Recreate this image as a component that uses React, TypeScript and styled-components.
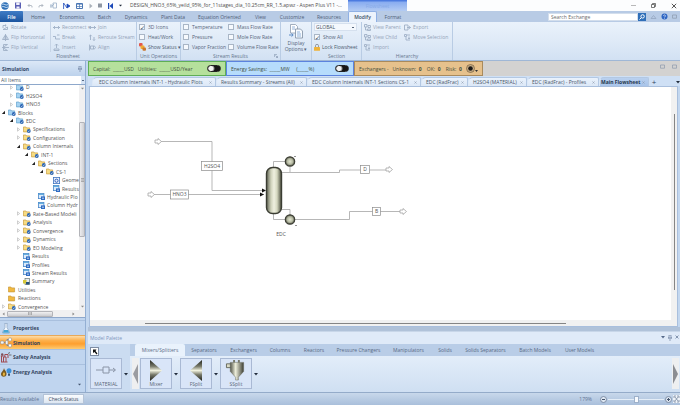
import React from "react";
import styled, { createGlobalStyle, css } from "styled-components";

const Global = createGlobalStyle`
  * { box-sizing: border-box; }
  html, body { margin: 0; }
  body { font-family: "Open Sans", "Noto Sans", sans-serif; font-size: 5px; line-height: 8px; color: #4b5766; }
  button, input, select { font: inherit; color: inherit; margin: 0; padding: 0; border: 0; background: none; border-radius: 0; }
  svg { display: block; flex: none; }
`;

const Shell = styled.div`
  display: flex;
  flex-direction: column;
  height: 100vh;
  background: #c3d7ef;
  overflow: hidden;
  white-space: nowrap;
`;

/* ---------- title bar ---------- */

const TitleBar = styled.header`
  display: flex;
  align-items: stretch;
  height: 11px;
  background: #fcfdfe;
`;
const QuickAccess = styled.div`
  display: flex;
  align-items: center;
  justify-content: space-between;
  width: 124px;
  padding: 0 2px 0 1px;
`;
const ToolButton = styled.button`
  display: grid;
  place-items: center;
`;
const DocTitle = styled.div`
  width: 224px;
  padding: 1px 0 0 6px;
  color: #4d4d4d;
`;
const ContextTab = styled.div`
  width: 59px;
  padding-top: 2px;
  text-align: center;
  color: #86a9e8;
  background: linear-gradient(#4c7be0 0 1px, #88acf0 2px, #b3cbf3);
`;
const WindowButtons = styled.div`
  display: flex;
  align-items: center;
  gap: 15px;
  margin-left: auto;
  padding-right: 3px;
`;

/* ---------- ribbon ---------- */

const TabStrip = styled.nav`
  display: flex;
  align-items: stretch;
  height: 11px;
  background: #b8cbe5;
`;
const RibbonTab = styled.button<{ $w: number; $kind?: "file" | "active" }>`
  width: ${(p) => p.$w}px;
  color: #4f6078;
  ${(p) => p.$kind === "file" && css`
    color: #fff;
    font-weight: 600;
    background: linear-gradient(#3f7cc6, #1d559f);
    border-radius: 1px 1px 0 0;
  `}
  ${(p) => p.$kind === "active" && css`
    font-weight: 600;
    color: #3c4c63;
    background: #ecf3fc;
    border: 1px solid #8fb0e4;
    border-bottom: 0;
    border-radius: 2px 2px 0 0;
  `}
`;
const SearchArea = styled.div`
  display: flex;
  align-items: center;
  gap: 4px;
  margin-left: auto;
  padding-right: 3px;
`;
const SearchInput = styled.input`
  width: 90px;
  height: 8px;
  padding: 0 2px;
  background: #fff;
  border: 1px solid #d3deec;
  &::placeholder { color: #6a6a6a; opacity: 1; }
`;
const SearchGroup = styled.div`
  display: flex;
  align-items: center;
`;
const Ribbon = styled.section`
  display: flex;
  height: 39px;
  background: linear-gradient(#eaf2fb, #dfeaf7 50%, #d2e1f3);
  border-bottom: 1px solid #9fb7d6;
`;
const Group = styled.div<{ $w: number }>`
  display: flex;
  flex-direction: column;
  width: ${(p) => p.$w}px;
  border-right: 1px solid #b9cce4;
`;
const GroupBody = styled.div`
  display: flex;
  flex: 1;
`;
const GroupLabel = styled.div`
  display: flex;
  justify-content: center;
  height: 8px;
  color: #66778e;
`;
const Launcher = styled.button`
  margin-left: auto;
  padding-right: 2px;
`;
const LabelText = styled.span<{ $shift?: boolean }>`
  ${(p) => p.$shift && "margin-left: auto; padding-left: 6px;"}
`;
const Column = styled.div<{ $w: number; $line?: boolean }>`
  display: grid;
  grid-template-rows: repeat(3, 10px);
  width: ${(p) => p.$w}px;
  padding-left: 2px;
  align-items: center;
  ${(p) => p.$line && "border-right: 1px solid #c6d4e6;"}
`;
const Command = styled.button<{ $live?: boolean }>`
  display: flex;
  align-items: center;
  gap: 2px;
  color: ${(p) => (p.$live ? "#4b5a6e" : "#93a3b8")};
`;
const Check = styled.label`
  display: flex;
  align-items: center;
  gap: 3px;
  color: #56657a;
`;
const Box = styled.input.attrs({ type: "checkbox" })`
  appearance: none;
  display: grid;
  place-items: center;
  width: 6px;
  height: 6px;
  border: 1px solid #a9b6c6;
  background: #f6f9fd;
  &:checked::after {
    content: "✓";
    font: bold 6px/6px "DejaVu Sans", sans-serif;
    color: #37465a;
  }
`;
const BigButton = styled.button`
  display: flex;
  flex-direction: column;
  align-items: center;
  gap: 1px;
  width: 100%;
  padding-top: 2px;
  line-height: 6px;
  color: #56657a;
`;
const Scope = styled.select`
  width: 43px;
  height: 8px;
  appearance: none;
  padding-left: 1px;
  line-height: 6px;
  border: 1px solid #d5e0ee;
  background: linear-gradient(#56657a, #56657a) right 2px center / 2px 1px no-repeat, #f4f8fd;
`;

/* ---------- workspace ---------- */

const Workspace = styled.div`
  display: flex;
  flex: 1;
  min-height: 0;
`;
const Side = styled.aside`
  display: flex;
  flex-direction: column;
  width: 86px;
  margin-right: 2px;
  background: #c0d5ef;
  border-right: 1px solid #93afd3;
`;
const SideHeader = styled.div`
  display: flex;
  align-items: center;
  justify-content: space-between;
  height: 15px;
  padding: 0 3px 0 2px;
  font-weight: 700;
  color: #34486a;
  background: linear-gradient(#dbe8f7, #bdd2ec);
`;
const Filter = styled.select`
  width: 100%;
  height: 9px;
  appearance: none;
  padding-left: 1px;
  background: linear-gradient(#5a6c86, #5a6c86) right 1px center / 2px 1px no-repeat, linear-gradient(#d6e4f5, #d6e4f5) right / 4px 100% no-repeat, #fff;
  border-bottom: 1px solid #8ea8cb;
`;
const TreeBox = styled.div`
  display: flex;
  flex: 1;
  min-height: 0;
  background: #fff;
`;
const TreeClip = styled.div`
  flex: 1;
  min-width: 0;
  overflow: hidden;
`;
const Tree = styled.ul`
  display: grid;
  grid-auto-rows: 1fr;
  height: calc(100% + 3px);
  margin: -2px 0 0;
  padding: 0;
  list-style: none;
`;
const TreeRow = styled.li<{ $depth: number }>`
  display: flex;
  align-items: center;
  gap: 2px;
  min-height: 0;
  padding-left: ${(p) => Math.round(p.$depth * 7.5) + 1}px;
  line-height: 8px;
  color: #555;
`;
const Twist = styled.span`
  width: 5px;
`;
const VScroll = styled.div`
  display: flex;
  flex-direction: column;
  align-items: center;
  justify-content: space-between;
  width: 6px;
  padding: 2px 0;
  background: #f0f0f1;
`;
const VThumb = styled.div`
  display: grid;
  place-items: center;
  width: 6px;
  height: 52%;
  margin-bottom: 36px;
  background: linear-gradient(90deg, #ececee, #cfd0d4);
  border: 1px solid #b3b4b9;
  border-radius: 1px;
`;
const HScroll = styled.div`
  display: flex;
  align-items: center;
  justify-content: space-between;
  height: 7px;
  padding: 0 10px 0 2px;
  background: #f0f0f1;
`;
const HThumb = styled.div`
  display: grid;
  place-items: center;
  width: 46px;
  height: 6px;
  margin-right: 18px;
  background: linear-gradient(#f0f0f1, #cbccd0);
  border: 1px solid #b3b4b9;
  border-radius: 1px;
`;
const Modes = styled.nav`
  display: flex;
  flex-direction: column;
  padding-top: 2px;
  border-top: 1px solid #8ea8cb;
`;
const Mode = styled.button<{ $on?: boolean }>`
  display: flex;
  align-items: center;
  gap: 1px;
  height: ${(p) => (p.$on ? 14 : 15)}px;
  font-weight: 700;
  color: #33445e;
  border-top: 1px solid #a9c0de;
  ${(p) => p.$on && "background: linear-gradient(#fddca8, #fdb04c 35%, #fd9f2f 60%, #fdcb72); border-color: #e7a95a;"}
`;
const ModeIcon = styled.span`
  width: 12px;
`;
const ModesFoot = styled.div`
  display: flex;
  justify-content: flex-end;
  height: 13px;
  padding: 4px 4px 0 0;
`;

const Main = styled.main`
  display: flex;
  flex: 1;
  flex-direction: column;
  min-width: 0;
`;
const Meters = styled.div`
  display: flex;
  height: 15px;
  background: #d3d2d1;
`;
const tones = {
  green: ["#b5e09c", "#5fae56"],
  blue: ["#b6dcfc", "#5c83de"],
  tan: ["#e6c18c", "#a98a5c"],
};
const Meter = styled.div<{ $w: number; $tone: keyof typeof tones }>`
  display: flex;
  align-items: center;
  justify-content: space-between;
  width: ${(p) => p.$w}px;
  padding: 0 4px;
  color: #44503f;
  white-space: pre;
  background: ${(p) => tones[p.$tone][0]};
  border: 1px solid ${(p) => tones[p.$tone][1]};
`;
const Switch = styled.input.attrs({ type: "checkbox", role: "switch" })`
  appearance: none;
  width: 14px;
  height: 7px;
  border: 1px solid #222;
  border-radius: 4px;
  background: radial-gradient(circle at 3px 50%, #f2f2f2 0 2px, #8b8b8b 3px, #161616 4px);
`;
const MainTools = styled.div`
  display: flex;
  gap: 7px;
  margin-left: auto;
  padding: 3px 3px 0 0;
`;
const DocTabs = styled.div`
  display: flex;
  align-items: stretch;
  height: 10px;
  padding: 1px 0 0 4px;
  background: #cfe0f5;
`;
const DocTab = styled.div<{ $w: number; $on?: boolean }>`
  display: flex;
  align-items: center;
  justify-content: space-between;
  width: ${(p) => p.$w}px;
  padding: 0 3px 0 4px;
  color: #4a5768;
  background: linear-gradient(#eaf2fc, #dce8f7);
  border: 1px solid #b3c8e3;
  border-bottom: 0;
  border-left-color: #dce8f7;
  border-radius: 5px 2px 0 0;
  &:first-child { padding-left: 6px; }
  ${(p) => p.$on && "padding-left: 1px; font-weight: 700; color: #26364e; background: linear-gradient(#b9d0ef, #a8c4ea);"}
`;
const AddTab = styled.button`
  width: 10px;
  font-size: 8px;
  color: #34465f;
`;
const MoreTabs = styled.button`
  margin-left: auto;
`;
const Sheet = styled.div`
  display: grid;
  flex: 1;
  grid-template-columns: 1fr 6px;
  grid-template-rows: 1fr 6px;
  min-height: 0;
  margin: 0 2px 0 1px;
  border: 1px solid #a9bfdd;
  background: #f1f1f1;
`;
const Canvas = styled.div`
  overflow: hidden;
  min-height: 0;
  background: #fff;
`;
const SheetV = styled.div`
  display: flex;
  justify-content: center;
  padding: 27px 0 30px;
`;
const SheetH = styled.div`
  display: flex;
  align-items: center;
  padding: 0 18% 0 55px;
`;
const Bar = styled.div<{ $v?: boolean }>`
  background: #858585;
  ${(p) => (p.$v ? "width: 1px;" : "height: 1px; flex: 1;")}
`;

/* ---------- palette ---------- */

const PaletteHeader = styled.div`
  display: flex;
  align-items: center;
  justify-content: space-between;
  height: 17px;
  padding: 4px 1px 0 2px;
  color: #8097bd;
  background: linear-gradient(#b0c2d9 0 4px, #dfeaf8 5px);
`;
const HeaderTools = styled.div`
  display: flex;
  gap: 3px;
`;
const Palette = styled.section`
  display: flex;
  height: 48px;
  background: linear-gradient(#e9f2fc, #cfdff2);
`;
const Picker = styled.div`
  display: flex;
  flex-direction: column;
  gap: 2px;
  width: 42px;
  padding: 3px 0 0 2px;
  background: #cbdcf1;
`;
const PointerButton = styled.button`
  display: grid;
  place-items: center;
  width: 9px;
  height: 9px;
  background: #fff;
  border: 1px solid #7d8ca3;
`;
const PaletteMain = styled.div`
  display: flex;
  flex: 1;
  flex-direction: column;
`;
const PaletteTabs = styled.div`
  display: flex;
  height: 12px;
  padding-left: 5px;
  background: #b9cde7;
`;
const PaletteTab = styled.button<{ $w: number; $on?: boolean }>`
  width: ${(p) => p.$w}px;
  color: #5a6b85;
  ${(p) => p.$on && "background: #e9f2fc; border-radius: 2px 2px 0 0;"}
`;
const Models = styled.div`
  display: flex;
  align-items: flex-start;
  padding: 2px 1px 0 2px;
`;
const ModelSlot = styled.div`
  display: flex;
  align-items: center;
`;
const ModelButton = styled.button`
  display: flex;
  flex-direction: column;
  align-items: center;
  justify-content: space-between;
  width: 32px;
  height: 31px;
  padding-top: 1px;
  line-height: 7px;
  color: #5a6577;
  background: #d9e5f8;
  border: 1px solid #a9b9d4;
`;
const Drop = styled.button`
  display: grid;
  place-items: center;
  width: 8px;
`;
const Pager = styled.button<{ $end?: boolean }>`
  display: grid;
  place-items: center;
  width: 7px;
  height: 31px;
  background: #eeeff0;
  margin-right: 1px;
  ${(p) => p.$end && "margin: 0 0 0 auto;"}
`;

/* ---------- status bar ---------- */

const StatusBar = styled.footer`
  display: flex;
  align-items: center;
  height: 13px;
  color: #5f7392;
  background: linear-gradient(#c8d8eb, #a9bfdb);
  border-top: 1px solid #94abc9;
`;
const StatusText = styled.span`
  width: 43px;
`;
const StatusButton = styled.button`
  width: 41px;
  height: 10px;
  color: #3c4a5e;
  background: linear-gradient(#fafcfe, #dce6f2);
  border: 1px solid #b4c3d7;
`;
const Zoom = styled.div`
  display: flex;
  align-items: center;
  gap: 1px;
  margin-left: auto;
`;
const ZoomValue = styled.output`
  margin-right: 7px;
`;
const Slider = styled.input.attrs({ type: "range" })`
  appearance: none;
  width: 56px;
  height: 7px;
  background: linear-gradient(#e4edf7, #e4edf7) center / 100% 1px no-repeat;
  &::-webkit-slider-thumb {
    appearance: none;
    width: 5px;
    height: 7px;
    background: #f8fbff;
    border: 1px solid #9db0c9;
  }
`;

/* ---------- drawings ---------- */

const Caret = ({ w = 4, c = "#222c3c" }: { w?: number; c?: string }) => (
  <svg width={w} height={w} viewBox="0 0 4 4"><path d="M0 1h4L2 3.4z" fill={c} /></svg>
);
const Cross = ({ s = 4, c = "#8794a8" }: { s?: number; c?: string }) => (
  <svg width={s} height={s} viewBox="0 0 6 6"><path d="M.8.8l4.4 4.4M5.2.8L.8 5.2" stroke={c} fill="none" /></svg>
);
const Square = () => (
  <svg width="5" height="5" viewBox="0 0 5 5"><path d="M.5 1h4v3.2h-4z" stroke="#8b99ac" strokeWidth=".7" fill="none" /></svg>
);
const Pin = () => (
  <svg width="4" height="6" viewBox="0 0 4 6"><path d="M1 0h2v3h1H0h1zM2 3v3" stroke="#627799" strokeWidth=".6" fill="none" /></svg>
);

const quick: Record<string, React.ReactNode> = {
  Application: <svg width="8" height="8" viewBox="0 0 8 8"><circle cx="4" cy="4" r="3.7" fill="#2e6fb6" /><path d="M1 2.4C3 1 5 4.500 7.200 2.200M.8 5C3 3.400 5 7 7.200 4.600" stroke="#d4e8fa" fill="none" /></svg>,
  Save: <svg width="6" height="7" viewBox="0 0 6 7"><path d="M0 .5h6v6H0z" fill="#5a5fb4" /><path d="M1.200.5h3.400v2.500H1.200zM1.500 4.500h3v2h-3z" fill="#f0f0fb" /></svg>,
  Undo: <svg width="6" height="6" viewBox="0 0 6 6"><path d="M1 2.500h3q1.500 0 1 2M2.500 1L1 2.500 2.500 4" stroke="#a3acb8" fill="none" strokeWidth=".8" /></svg>,
  Redo: <svg width="6" height="6" viewBox="0 0 6 6"><path d="M5 2.500H2q-1.500 0-1 2M3.500 1L5 2.500 3.500 4" stroke="#a3acb8" fill="none" strokeWidth=".8" /></svg>,
  Sheet: <svg width="7" height="7" viewBox="0 0 7 7"><path d="M3 1h3.500v5H3zM0 3h2v2H0zM2 4l2-2" stroke="#9aafc8" fill="none" strokeWidth=".8" /></svg>,
  Next: <svg width="7" height="6" viewBox="0 0 7 6"><path d="M.6 0v6M.6 0L4 5V1l3 2-3 2" stroke="#1c49b8" fill="#1c49b8" strokeWidth=".8" /></svg>,
  Panel: <svg width="7" height="6" viewBox="0 0 7 6"><path d="M.5.5h6v5h-6z" fill="#fff" stroke="#4a77b4" /><path d="M.5 1.300h6M.5 3.500h6M3.500 1v4" stroke="#4a77b4" strokeWidth=".7" /></svg>,
  Run: <svg width="4" height="6" viewBox="0 0 4 6"><path d="M.5.5v5L3.500 3z" fill="#aab1ba" /></svg>,
  Stop: <svg width="4" height="5" viewBox="0 0 4 5"><path d="M0 .5h4v4H0z" fill="#8e96a2" /></svg>,
  Reset: <svg width="5" height="6" viewBox="0 0 5 6"><path d="M0 0h1.200v6H0zM5 0v6L1.400 3z" fill="#1c49b8" /></svg>,
  More: <Caret w={3} />,
};

const glyphs: Record<string, string> = {
  rotate: "M1 5.500h4.500V3zM1 4V1.500h3M3 .5l1.200 1L3 2.500",
  fliph: "M3.500 0v7M3 1.500v4H.5zM4 1.500v4h2.500z",
  flipv: "M0 3.500h7M1.500 3V.5h4zM1.500 4v2.500h4z",
  link: "M0 3.500h7M2 2L.5 3.500 2 5M5 2l1.500 1.500L5 5",
  break: "M0 2.500h2.500v2.500H7M4 1h2.500",
  insert: "M3.500 0v4M2 1.500L3.500 0 5 1.500M1 5h5v1.500H1z",
  route: "M1.500 6V1M.3 2.200L1.500 1l1.200 1.200M5 3v3.500M4 5.500l1 1 1-1",
  align: "M.5.500v6M1.500 2h3v3h-3zM5 1.500l1.500 2L5 5.500",
  tree: "M.5.500h2.500v2.500H.5zM4 1.500h2.500v2H4zM3.500 5h3v1.500h-3zM1.500 3v3h2",
  export: "M.5 1h3.500v5H.5zM3 3.500h3.500M5.200 2.200l1.300 1.300-1.300 1.300",
  import: "M.5.500h2v2h-2zM3 1h3M2 3v3h4M5 2.500v2M4 4l1 1 1-1",
};
const Glyph = ({ kind }: { kind: string }) => (
  <svg width="7" height="7" viewBox="0 0 7 7"><path d={glyphs[kind]} stroke="#9fb0c6" fill="none" strokeWidth=".9" /></svg>
);

const StatusGlyph = () => (
  <svg width="7" height="8" viewBox="0 0 7 8"><rect x="0" y="0" width="3.600" height="3.600" rx="1" fill="#e2574b" /><rect x="1.500" y="2.500" width="4" height="3.600" rx="1" fill="#f0ab32" /><rect x="3.500" y="4.600" width="3.500" height="3.200" rx="1" fill="#c9772c" /></svg>
);
const Lock = () => (
  <svg width="6" height="7" viewBox="0 0 6 7"><path d="M1.500 3V1.800a1.500 1.500 0 013 0V3" stroke="#8a8f98" fill="none" strokeWidth=".9" /><rect y="3" width="6" height="3.800" rx=".6" fill="#eeb33b" /></svg>
);
const PagesIcon = () => (
  <svg width="16" height="15" viewBox="0 0 16 15"><path d="M2.500.5h5l2 2V9h-7z" fill="#fff" stroke="#8e9cae" strokeWidth=".8" /><path d="M7.500 5h5l2 2v7h-7z" fill="#f6fafe" stroke="#7e8da1" strokeWidth=".8" /><path d="M4 3h3M4 5h3M9 8h3M9 10h4M9 12h4" stroke="#7ba1d0" strokeWidth=".8" /><path d="M1 11h4M3.500 9.500L5.200 11l-1.700 1.600" stroke="#5d8bc4" fill="none" /></svg>
);

type IconKind = "stream" | "folder" | "plain" | "form" | "grid" | "summary";
const TreeIcon = ({ kind }: { kind: IconKind }) => {
  if (kind === "form") return (
    <svg width="7" height="7" viewBox="0 0 7 7"><rect x=".4" y=".4" width="6.200" height="6.200" fill="#eaf2fc" stroke="#3f74c0" strokeWidth=".8" /><circle cx="3.500" cy="3.700" r="1.600" fill="none" stroke="#2150b4" strokeWidth=".9" /></svg>
  );
  if (kind === "grid") return (
    <svg width="7" height="7" viewBox="0 0 7 7"><rect x=".4" y=".4" width="5.500" height="5.200" fill="#dcebfb" stroke="#4a87c8" strokeWidth=".8" /><path d="M.4 1.300h5.500" stroke="#4a9fd8" /><rect x="3" y="3.400" width="4" height="3.600" fill="#2f6bc2" /><path d="M4 5.200h2" stroke="#fff" strokeWidth=".7" /></svg>
  );
  if (kind === "summary") return (
    <svg width="7" height="7" viewBox="0 0 7 7"><rect x="2" y=".5" width="4.600" height="6" fill="#e9eef0" stroke="#677" strokeWidth=".7" /><path d="M0 2h3.500v3.500H0z" fill="#d5c637" /><path d="M3 4h3.500v2.500H3z" fill="#27507a" /></svg>
  );
  const blue = kind === "stream";
  return (
    <svg width="8" height="7" viewBox="0 0 8 7">
      <path d="M.4 1h2.500l.8.900h2.900v4H.4z" fill={blue ? "#a6d3f2" : kind === "plain" ? "#f1b840" : "#f7dc83"} stroke={blue ? "#5d9fcc" : "#c79a3c"} strokeWidth=".7" />
      {kind !== "plain" && <><circle cx="5.800" cy="5" r="1.900" fill="#2c66b4" /><path d="M4.900 5l.7.700 1.200-1.300" stroke="#fff" fill="none" strokeWidth=".6" /></>}
    </svg>
  );
};
const Twisty = ({ open }: { open: boolean }) => (
  <svg width="5" height="5" viewBox="0 0 5 5">{open ? <path d="M4 .8v3.200H.8z" fill="#222" /> : <path d="M1.500.8v3.400L3.600 2.500z" fill="#fff" stroke="#b0b0b0" strokeWidth=".6" />}</svg>
);

const modeIcons: Record<string, React.ReactNode> = {
  Properties: <svg width="12" height="11" viewBox="0 0 12 11"><path d="M4.500.5h3M5 .5v4L2.500 9q-.4 1.300.8 1.300h5.400q1.200 0 .8-1.300L7 4.500v-4" fill="#f1f8ff" stroke="#8ca5c0" strokeWidth=".7" /><path d="M4 7h4l1.300 2.700H2.700z" fill="#45a5d4" /></svg>,
  Simulation: <svg width="12" height="11" viewBox="0 0 12 11"><path d="M2 5.500h3M7 2.500v6M7 2.500h2M7 8.500h2" stroke="#7d8797" fill="none" /><rect x=".5" y="4" width="3.500" height="3" rx="1" fill="#f2f3f5" stroke="#8d8d8d" strokeWidth=".6" /><rect x="5.500" y="3.500" width="2.500" height="4" rx="1" fill="#f2f3f5" stroke="#8d8d8d" strokeWidth=".6" /><rect x="8.500" y="1" width="3" height="3" rx="1" fill="#fff" stroke="#8d8d8d" strokeWidth=".6" /><rect x="8.500" y="7" width="3" height="3" rx="1" fill="#fff" stroke="#8d8d8d" strokeWidth=".6" /></svg>,
  "Safety Analysis": <svg width="12" height="11" viewBox="0 0 12 11"><path d="M1.500 10V4M.8 4h3M3.500 10V5h2.500v5M1 10h6.500M4.800 5V2.500H8V6" stroke="#a04a50" fill="none" /><path d="M8 1.500l2-1M9 3h2.500" stroke="#555" strokeWidth=".8" /><circle cx="2.200" cy="2.500" r="1.200" fill="#7c5059" /></svg>,
  "Energy Analysis": <svg width="12" height="11" viewBox="0 0 12 11"><path d="M4 1C4.500 3.500 7 4.500 6.500 7.500 6 10.500 1.500 10.500 1 7.500.8 5 3.500 4 4 1z" fill="#7a5b20" /><path d="M4 5q1.600 1.500.8 3.200-1 1-2 0Q2.500 6.500 4 5z" fill="#edb73c" /><circle cx="9" cy="3.800" r="2.500" fill="#3d8fd6" /><path d="M8 6.500h2v2.200H8z" fill="#37536e" /></svg>,
};

const Flowsheet = () => (
  <svg width="340" height="170" viewBox="0 0 340 170" fontSize="5" fill="#555">
    <defs>
      <linearGradient id="tube"><stop offset="0" stopColor="#5d6050" /><stop offset=".3" stopColor="#cfd2bb" /><stop offset=".5" stopColor="#eff0e0" /><stop offset=".7" stopColor="#d5d8c0" /><stop offset="1" stopColor="#474a3b" /></linearGradient>
      <radialGradient id="ball"><stop offset="0" stopColor="#e4e7d2" /><stop offset=".6" stopColor="#b4b8a1" /><stop offset="1" stopColor="#4d5042" /></radialGradient>
    </defs>
    <g fill="none" stroke="#a4a4a4" strokeWidth=".8">
      <path d="M71 54.500h51V103.500h52M64 107.500h110" />
      <path d="M183.500 80v-5.500h12M200 80v5M192 85.500h57.500v-2.500H296" />
      <path d="M183.500 126v6.500h12M192 122.500h8v6M205 132.500h54.500V124.500H311" />
      {[[65, 54.500], [58, 107.500], [296, 82.500], [310, 124.500]].map(([x, y]) => (
        <path key={x} fill="#fff" d={`M${x} ${y - 1.500}h3v-1.500l3.500 3-3.500 3v-1.500h-3z`} />
      ))}
    </g>
    <g fill="#fff" stroke="#8c8c8c" strokeWidth=".7">
      <rect x="111.500" y="74.500" width="21" height="9" />
      <rect x="80.500" y="103" width="18" height="9" />
      <rect x="270.500" y="78.500" width="9" height="8" />
      <rect x="282.500" y="120.500" width="8" height="8" />
    </g>
    <path d="M172 101.500l4 2-4 2zM170 105.500l4 2-4 2z" fill="#111" />
    <rect x="176.500" y="80.500" width="15" height="46" rx="6" fill="url(#tube)" stroke="#3b3d33" strokeWidth="1.400" />
    <circle cx="200" cy="74.500" r="4.700" fill="url(#ball)" stroke="#3b3d33" strokeWidth="1.200" />
    <circle cx="200" cy="132.500" r="4.700" fill="url(#ball)" stroke="#3b3d33" strokeWidth="1.200" />
    <path d="M204 69.500h2M205 138.500h2" stroke="#777" strokeWidth=".8" />
    <g textAnchor="middle">
      <text x="122" y="81">H2SO4</text>
      <text x="89.500" y="109">HNO3</text>
      <text x="275" y="84">D</text>
      <text x="286.500" y="126">B</text>
      <text x="191" y="149">EDC</text>
    </g>
  </svg>
);

const MaterialArt = () => (
  <svg width="22" height="20" viewBox="0 0 22 20"><path d="M1 10h7M14 10h6M18 8l2.500 2L18 12M8 7h6v6H8z" stroke="#8a94a6" fill="none" /></svg>
);
const MixerArt = () => (
  <svg width="22" height="21" viewBox="0 0 22 21">
    <defs><linearGradient id="metal" x2="0" y2="1"><stop offset="0" stopColor="#22241c" /><stop offset=".3" stopColor="#77796a" /><stop offset=".5" stopColor="#f0f1de" /><stop offset=".7" stopColor="#77796a" /><stop offset="1" stopColor="#1c1d17" /></linearGradient></defs>
    <path d="M5 0v21l12-10.500z" fill="url(#metal)" />
  </svg>
);
const FSplitArt = () => <svg width="22" height="21" viewBox="0 0 22 21"><path d="M17 0v21L5 10.500z" fill="url(#metal)" /></svg>;
const SSplitArt = () => (
  <svg width="22" height="21" viewBox="0 0 22 22">
    <defs><linearGradient id="vessel"><stop offset="0" stopColor="#54564a" /><stop offset=".4" stopColor="#eeefdb" /><stop offset="1" stopColor="#3a3c32" /></linearGradient></defs>
    <path d="M8 0h2v3H8zM13 0h2v3h-2z" fill="#77796a" /><path d="M1 4h5v4H1z" fill="#d9dac6" stroke="#4b4d42" strokeWidth=".8" /><path d="M5 2.500h14V12l-5.500 6v3h-3v-3L5 12z" fill="url(#vessel)" stroke="#66685a" strokeWidth=".5" />
  </svg>
);

/* ---------- data ---------- */

const ribbonTabs: [string, number][] = [["Home", 30], ["Economics", 38], ["Batch", 27], ["Dynamics", 36], ["Plant Data", 38], ["Equation Oriented", 55], ["View", 27], ["Customize", 36], ["Resources", 38], ["Modify", 29], ["Format", 32]];
const docTabs: [string, number][] = [["EDC Column Internals INT-1 - Hydraulic Plots", 124], ["Results Summary - Streams (All)", 91], ["EDC Column Internals INT-1 Sections CS-1", 114], ["EDC (RadFrac)", 47], ["H2SO4 (MATERIAL)", 59], ["EDC (RadFrac) - Profiles", 72], ["Main Flowsheet", 50]];
const paletteTabs: [string, number][] = [["Mixers/Splitters", 50], ["Separators", 38], ["Exchangers", 41], ["Columns", 32], ["Reactors", 36], ["Pressure Changers", 53], ["Manipulators", 47], ["Solids", 26], ["Solids Separators", 55], ["Batch Models", 44], ["User Models", 45]];
const tree: [string, number, IconKind, boolean?][] = [
  ["D", 1, "stream", false], ["H2SO4", 1, "stream", false], ["HNO3", 1, "stream", false],
  ["Blocks", 0, "stream", true], ["EDC", 1, "stream", true],
  ["Specifications", 2, "folder", false], ["Configuration", 2, "folder", false], ["Column Internals", 2, "folder", true],
  ["INT-1", 3, "folder", true], ["Sections", 4, "folder", true], ["CS-1", 5, "folder", true],
  ["Geome", 6, "form"], ["Results", 6, "grid"], ["Hydraulic Plo", 4, "grid"], ["Column Hydr", 4, "grid"],
  ["Rate-Based Modeli", 2, "folder", false], ["Analysis", 2, "folder", false], ["Convergence", 2, "folder", false],
  ["Dynamics", 2, "folder", false], ["EO Modeling", 2, "folder", false],
  ["Results", 2, "grid"], ["Profiles", 2, "grid"], ["Stream Results", 2, "grid"], ["Summary", 2, "summary"],
  ["Utilities", 0, "plain"], ["Reactions", 0, "plain"], ["Convergence", 0, "folder", false],
];
const models: [string, () => React.ReactElement][] = [["Mixer", MixerArt], ["FSplit", FSplitArt], ["SSplit", SSplitArt]];

const Commands = ({ w, items, line }: { w: number; items: [string, string][]; line?: boolean }) => (
  <Column $w={w} $line={line}>
    {items.map(([label, icon]) => <Command key={label}><Glyph kind={icon} />{label}</Command>)}
  </Column>
);
const Checks = ({ w, items }: { w: number; items: string[] }) => (
  <Column $w={w}>{items.map((t) => <Check key={t}><Box />{t}</Check>)}</Column>
);
const Model = ({ name, Art }: { name: string; Art: () => React.ReactElement }) => (
  <ModelSlot>
    <ModelButton><Art />{name}</ModelButton>
    <Drop aria-label={`${name} options`}><Caret /></Drop>
  </ModelSlot>
);

export default function App() {
  return (
    <Shell>
      <Global />
      <TitleBar>
        <QuickAccess>{Object.entries(quick).map(([k, icon]) => <ToolButton key={k} aria-label={k}>{icon}</ToolButton>)}</QuickAccess>
        <DocTitle>DESIGN_HNO3_65%_yeild_95%_for_11stages_dia_10.25cm_RR_1.5.apwz - Aspen Plus V11 -...</DocTitle>
        <ContextTab>Flowsheet</ContextTab>
        <WindowButtons>
          <ToolButton aria-label="Minimize"><svg width="5" height="5" viewBox="0 0 5 5"><path d="M0 2.500h5" stroke="#8a8a8a" strokeWidth=".6" /></svg></ToolButton>
          <ToolButton aria-label="Restore"><svg width="5" height="5" viewBox="0 0 5 5"><path d="M.5 1.500h3v3h-3zM1.500 1.500v-1h3v3h-1" stroke="#444" strokeWidth=".7" fill="none" /></svg></ToolButton>
          <ToolButton aria-label="Close"><Cross s={6} c="#555" /></ToolButton>
        </WindowButtons>
      </TitleBar>

      <TabStrip>
        <RibbonTab $w={23} $kind="file">File</RibbonTab>
        {ribbonTabs.map(([t, w]) => <RibbonTab key={t} $w={w} $kind={t === "Modify" ? "active" : undefined}>{t}</RibbonTab>)}
        <SearchArea>
          <SearchGroup>
            <SearchInput aria-label="Search Exchange" placeholder="Search Exchange" />
            <ToolButton aria-label="Search"><svg width="8" height="8" viewBox="0 0 8 8"><path d="M0 0h8v8H0z" fill="#2f6fb9" /><circle cx="4.600" cy="3.400" r="1.700" stroke="#fff" fill="none" /><path d="M3.400 4.600L1.500 6.500" stroke="#fff" /></svg></ToolButton>
          </SearchGroup>
          <ToolButton aria-label="Collapse ribbon"><svg width="7" height="6" viewBox="0 0 7 6"><path d="M1 4.500L3.500 1.500 6 4.500z" stroke="#94a6c0" strokeWidth=".8" fill="none" /></svg></ToolButton>
          <ToolButton aria-label="Help"><svg width="7" height="7" viewBox="0 0 7 7"><circle cx="3.500" cy="3.500" r="3" fill="#2e66c4" /><path d="M2.300 2.700q1.200-1.500 2.200 0 .2.700-1 1.200M3.500 4.800v.8" stroke="#fff" strokeWidth=".7" fill="none" /></svg></ToolButton>
          <Square />
        </SearchArea>
      </TabStrip>

      <Ribbon>
        <Group $w={137}>
          <GroupBody>
            <Commands w={51} line items={[["Rotate", "rotate"], ["Flip Horizontal", "fliph"], ["Flip Vertical", "flipv"]]} />
            <Commands w={36} items={[["Reconnect ▾", "link"], ["Break", "break"], ["Insert", "insert"]]} />
            <Commands w={48} items={[["Join", "link"], ["Reroute Stream", "route"], ["Align", "align"]]} />
          </GroupBody>
          <GroupLabel>Flowsheet</GroupLabel>
        </Group>
        <Group $w={44}>
          <GroupBody>
            <Column $w={44}>
              <Check><Box defaultChecked />3D Icons</Check>
              <Check><Box />Heat/Work</Check>
              <Command $live><StatusGlyph />Show Status ▾</Command>
            </Column>
          </GroupBody>
          <GroupLabel>Unit Operations</GroupLabel>
        </Group>
        <Group $w={100}>
          <GroupBody>
            <Checks w={45} items={["Temperature", "Pressure", "Vapor Fraction"]} />
            <Checks w={54} items={["Mass Flow Rate", "Mole Flow Rate", "Volume Flow Rate"]} />
          </GroupBody>
          <GroupLabel>
            <LabelText $shift>Stream Results</LabelText>
            <Launcher aria-label="Stream Results options"><svg width="4" height="4" viewBox="0 0 4 4"><path d="M.4 3V.4H3M1.500 1.500l2 2M3.500 2v1.500H2" stroke="#7c8ea8" strokeWidth=".6" fill="none" /></svg></Launcher>
          </GroupLabel>
        </Group>
        <Group $w={31}>
          <BigButton><PagesIcon /><span>Display<br />Options ▾</span></BigButton>
        </Group>
        <Group $w={50}>
          <GroupBody>
            <Column $w={49}>
              <Scope aria-label="Section"><option>GLOBAL</option></Scope>
              <Check><Box defaultChecked />Show All</Check>
              <Command $live><Lock />Lock Flowsheet</Command>
            </Column>
          </GroupBody>
          <GroupLabel>Section</GroupLabel>
        </Group>
        <Group $w={91}>
          <GroupBody>
            <Commands w={40} items={[["View Parent", "tree"], ["View Child", "tree"], ["Import", "import"]]} />
            <Commands w={50} items={[["Export", "export"], ["Move Selection", "import"]]} />
          </GroupBody>
          <GroupLabel>Hierarchy</GroupLabel>
        </Group>
      </Ribbon>

      <Workspace>
        <Side>
          <SideHeader>Simulation<Pin /></SideHeader>
          <Filter aria-label="Filter items"><option>All Items</option></Filter>
          <TreeBox>
            <TreeClip>
              <Tree>
                {tree.map(([label, depth, icon, open], i) => (
                  <TreeRow key={i} $depth={depth}>
                    <Twist>{open !== undefined && <Twisty open={open} />}</Twist>
                    <TreeIcon kind={icon} />
                    {label}
                  </TreeRow>
                ))}
              </Tree>
            </TreeClip>
            <VScroll>
              <Caret w={3} c="#8b8b8b" />
              <VThumb><svg width="3" height="4" viewBox="0 0 3 4"><path d="M0 .5h3M0 2h3M0 3.500h3" stroke="#888" strokeWidth=".6" /></svg></VThumb>
              <Caret w={3} c="#8b8b8b" />
            </VScroll>
          </TreeBox>
          <HScroll>
            <svg width="3" height="4" viewBox="0 0 3 4"><path d="M2.500.5v3L.5 2z" fill="#888" /></svg>
            <HThumb><svg width="4" height="3" viewBox="0 0 4 3"><path d="M.5 0v3M2 0v3M3.500 0v3" stroke="#888" strokeWidth=".6" /></svg></HThumb>
            <svg width="3" height="4" viewBox="0 0 3 4"><path d="M.5.5v3l2-1.500z" fill="#888" /></svg>
          </HScroll>
          <Modes>
            {Object.entries(modeIcons).map(([name, icon]) => (
              <Mode key={name} $on={name === "Simulation"}><ModeIcon>{icon}</ModeIcon>{name}</Mode>
            ))}
            <ModesFoot><Caret w={3} c="#42556f" /></ModesFoot>
          </Modes>
        </Side>

        <Main>
          <Meters>
            <Meter $w={138} $tone="green"><span>Capital:  _____USD   Utilities:  _____USD/Year</span><Switch aria-label="Economics" /></Meter>
            <Meter $w={128} $tone="blue"><span>Energy Savings:  _____MW     (_____%)</span><Switch aria-label="Energy" /></Meter>
            <Meter $w={129} $tone="tan">
              <span>Exchangers -   Unknown:  <b>0</b>    OK:  <b>0</b>    Risk:  <b>0</b></span>
              <ToolButton aria-label="Exchanger view"><svg width="12" height="9" viewBox="0 0 12 9"><circle cx="4.500" cy="4.500" r="4" fill="#c8ad85" stroke="#735d3c" strokeWidth=".7" /><circle cx="4.500" cy="4.500" r="2.300" fill="#1c1a18" /><path d="M9 6h3l-1.500 2z" fill="#333" /></svg></ToolButton>
            </Meter>
            <MainTools><Square /><Square /></MainTools>
          </Meters>
          <DocTabs>
            {docTabs.map(([t, w], i) => (
              <DocTab key={t} $w={w} $on={i === 6}>{t}<ToolButton aria-label={`Close ${t}`}><Cross s={3} /></ToolButton></DocTab>
            ))}
            <AddTab aria-label="New tab">+</AddTab>
            <MoreTabs aria-label="More tabs"><Caret /></MoreTabs>
          </DocTabs>
          <Sheet>
            <Canvas><Flowsheet /></Canvas>
            <SheetV><Bar $v /></SheetV>
            <SheetH><Bar /></SheetH>
          </Sheet>

          <PaletteHeader>Model Palette<HeaderTools><Caret w={4} c="#566a8b" /><Pin /><Cross c="#566a8b" /></HeaderTools></PaletteHeader>
          <Palette>
            <Picker>
              <PointerButton aria-label="Pointer"><svg width="6" height="6" viewBox="0 0 6 6"><path d="M1 .5h3.500L3.500 2l2 2.500-1 1-2-2.500L1 4z" fill="#111" /></svg></PointerButton>
              <Model name="MATERIAL" Art={MaterialArt} />
            </Picker>
            <PaletteMain>
              <PaletteTabs>{paletteTabs.map(([t, w], i) => <PaletteTab key={t} $w={w} $on={i === 0}>{t}</PaletteTab>)}</PaletteTabs>
              <Models>
                <Pager aria-label="Previous"><svg width="5" height="20" viewBox="0 0 5 20"><path d="M5 0v20L0 10z" fill="#9a9ca1" /></svg></Pager>
                {models.map(([n, Art]) => <Model key={n} name={n} Art={Art} />)}
                <Pager $end aria-label="Next"><svg width="5" height="20" viewBox="0 0 5 20"><path d="M0 0v20l5-10z" fill="#8b8d92" /></svg></Pager>
              </Models>
            </PaletteMain>
          </Palette>
        </Main>
      </Workspace>

      <StatusBar>
        <StatusText>Results Available</StatusText>
        <StatusButton>Check Status</StatusButton>
        <Zoom>
          <ZoomValue>179%</ZoomValue>
          <ToolButton aria-label="Zoom out"><svg width="7" height="7" viewBox="0 0 7 7"><circle cx="3.500" cy="3.500" r="3" fill="#dfe8f3" stroke="#6e7f98" strokeWidth=".8" /><path d="M2 3.500h3" stroke="#44546c" /></svg></ToolButton>
          <Slider aria-label="Zoom level" defaultValue={50} />
          <ToolButton aria-label="Zoom in"><svg width="7" height="7" viewBox="0 0 7 7"><circle cx="3.500" cy="3.500" r="3" fill="#dfe8f3" stroke="#6e7f98" strokeWidth=".8" /><path d="M2 3.500h3M3.500 2v3" stroke="#44546c" /></svg></ToolButton>
          <ToolButton aria-label="Fit to window"><svg width="7" height="8" viewBox="0 0 7 8"><path d="M0 0h7v8H0z" fill="#eef3f9" /><path d="M1 3V1h2M4 1h2v2M6 5v2H4M3 7H1V5M2 2l3 4M5 2L2 6" stroke="#6e7f98" strokeWidth=".7" fill="none" /></svg></ToolButton>
        </Zoom>
      </StatusBar>
    </Shell>
  );
}
